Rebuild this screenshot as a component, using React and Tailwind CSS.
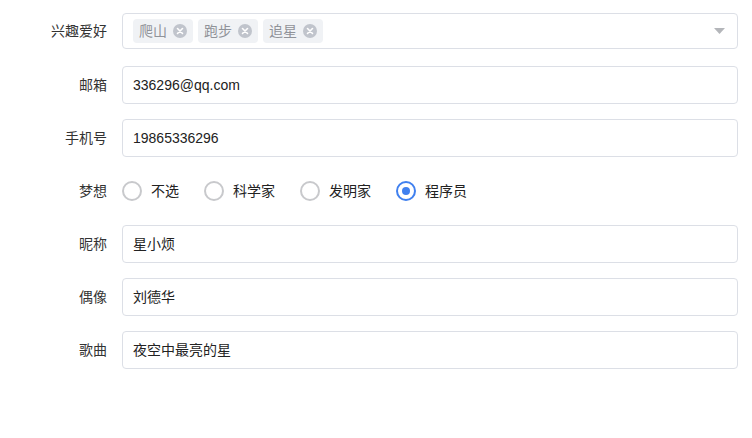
import { useState } from "react";

const font = {
  fontFamily: '"Liberation Sans", "Noto Sans CJK SC", sans-serif',
};

const Tag = ({ label }) => (
  <span className="flex items-center h-[24px] px-[6px] gap-[6px] rounded-[4px] bg-[#f0f2f5] text-[#909399] text-[14px]">
    {label}
    <span className="w-[14px] h-[14px] rounded-full bg-[#c0c4cc] flex items-center justify-center">
      <svg width="8" height="8" viewBox="0 0 8 8">
        <path d="M1.5 1.5L6.5 6.5M6.5 1.5L1.5 6.5" stroke="#fff" strokeWidth="1.6" strokeLinecap="round" />
      </svg>
    </span>
  </span>
);

const Row = ({ label, children, tall }) => (
  <div className={`flex items-center ${tall ? "mb-[17px]" : "mb-[15px]"}`}>
    <label className="w-[107px] text-right text-[14px] text-[#333]">{label}</label>
    <div className="ml-[15px] w-[616px]">{children}</div>
  </div>
);

const Input = ({ value }) => (
  <div className="h-[38px] border border-[#dcdfe6] rounded-[4px] flex items-center px-[10px] text-[14px] text-[#222] bg-white">
    {value}
  </div>
);

const Radio = ({ label, checked, onClick }) => (
  <button onClick={onClick} className="flex items-center mr-[25px]">
    <span
      className={`w-[20px] h-[20px] rounded-full border-2 flex items-center justify-center ${
        checked ? "border-[#4080ef]" : "border-[#c8c9cc]"
      }`}
    >
      {checked && <span className="w-[8px] h-[8px] rounded-full bg-[#4080ef]" />}
    </span>
    <span className="ml-[9px] text-[14px] text-[#222]">{label}</span>
  </button>
);

export default function App() {
  const [dream, setDream] = useState("程序员");
  const dreams = ["不选", "科学家", "发明家", "程序员"];

  return (
    <div className="w-[752px] h-[438px] bg-white pt-[13px]" style={font}>
      <Row label="兴趣爱好" tall>
        <div className="h-[36px] border border-[#dcdfe6] rounded-[4px] flex items-center pl-[10px] pr-[12px]">
          <div className="flex items-center gap-[5px] flex-1">
            <Tag label="爬山" />
            <Tag label="跑步" />
            <Tag label="追星" />
          </div>
          <svg width="11" height="6" viewBox="0 0 11 6">
            <path d="M0 0H11L5.5 6Z" fill="#b4b6ba" />
          </svg>
        </div>
      </Row>
      <Row label="邮箱">
        <Input value="336296@qq.com" />
      </Row>
      <Row label="手机号">
        <Input value="19865336296" />
      </Row>
      <Row label="梦想">
        <div className="h-[38px] flex items-center">
          {dreams.map((d) => (
            <Radio key={d} label={d} checked={dream === d} onClick={() => setDream(d)} />
          ))}
        </div>
      </Row>
      <Row label="昵称">
        <Input value="星小烦" />
      </Row>
      <Row label="偶像">
        <Input value="刘德华" />
      </Row>
      <Row label="歌曲">
        <Input value="夜空中最亮的星" />
      </Row>
    </div>
  );
}
